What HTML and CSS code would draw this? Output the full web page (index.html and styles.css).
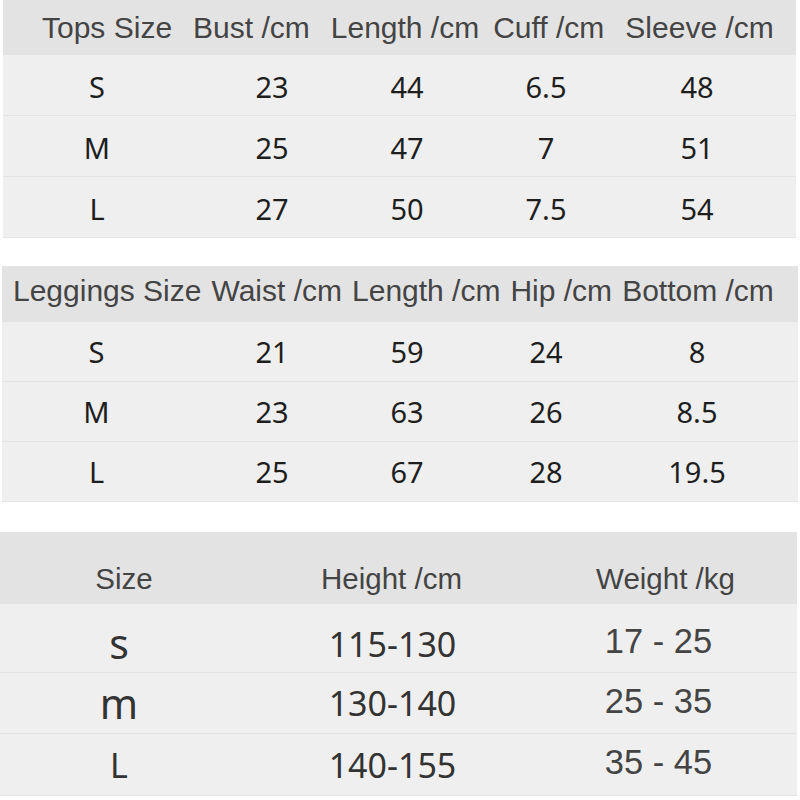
FILE: index.html
```html
<!DOCTYPE html>
<html>
<head>
<meta charset="utf-8">
<link rel="stylesheet" href="styles.css">
</head>
<body>
<section class="table t1">
  <div class="head">
    <span>Tops Size</span><span>Bust /cm</span><span>Length /cm</span><span class="tight">Cuff /cm</span><span>Sleeve /cm</span>
  </div>
  <div class="row"><span>S</span><span>23</span><span>44</span><span>6.5</span><span>48</span></div>
  <div class="row"><span>M</span><span>25</span><span>47</span><span>7</span><span>51</span></div>
  <div class="row"><span>L</span><span>27</span><span>50</span><span>7.5</span><span>54</span></div>
</section>

<section class="table t2">
  <div class="head">
    <span>Leggings Size</span><span>Waist /cm</span><span>Length /cm</span><span>Hip /cm</span><span>Bottom /cm</span>
  </div>
  <div class="row"><span>S</span><span>21</span><span>59</span><span>24</span><span>8</span></div>
  <div class="row"><span>M</span><span>23</span><span>63</span><span>26</span><span>8.5</span></div>
  <div class="row"><span>L</span><span>25</span><span>67</span><span>28</span><span>19.5</span></div>
</section>

<section class="table t3">
  <div class="head">
    <span>Size</span><span>Height /cm</span><span>Weight /kg</span>
  </div>
  <div class="row first"><span class="lower">s</span><span class="h">115-130</span><span class="w">17 - 25</span></div>
  <div class="row"><span class="lower">m</span><span class="h">130-140</span><span class="w">25 - 35</span></div>
  <div class="row"><span class="cap">L</span><span class="h">140-155</span><span class="w">35 - 45</span></div>
</section>
</body>
</html>
```

FILE: styles.css
```css
html, body {
  margin: 0;
  padding: 0;
  background: #ffffff;
}

body {
  width: 800px;
  height: 800px;
  overflow: hidden;
}

.table {
  background: #efefef;
}

.head {
  background: #e3e3e3;
  color: #444444;
  font-family: "Liberation Sans", Arial, sans-serif;
  white-space: nowrap;
}

.head span,
.row span {
  white-space: nowrap;
  line-height: 1;
}

.row {
  display: grid;
  align-items: center;
  justify-items: center;
  border-bottom: 1px solid #e4e4e4;
  color: #1e1e1e;
  font-family: "Noto Sans", "Open Sans", sans-serif;
  box-sizing: border-box;
}

/* ---------- table 1 ---------- */
.t1 {
  margin: 0 4px 0 3px;
}

.t1 .head {
  height: 55px;
  display: flex;
  align-items: center;
  gap: 21px;
  padding-left: 39px;
  font-size: 30px;
}

.t1 .head .tight {
  margin-left: -7px;
}

.t1 .row {
  height: 61px;
  padding-top: 3px;
  font-size: 29px;
  grid-template-columns: 188px 162px 108px 170px 132px;
}

/* ---------- table 2 ---------- */
.t2 {
  margin: 28px 2px 0 2px;
}

.t2 .head {
  height: 56px;
  box-sizing: border-box;
  display: flex;
  align-items: center;
  gap: 10px;
  padding-left: 11px;
  padding-bottom: 7px;
  font-size: 30px;
}

.t2 .row {
  height: 60px;
  font-size: 29px;
  grid-template-columns: 189px 162px 108px 170px 132px;
}

/* ---------- table 3 ---------- */
.t3 {
  margin: 30px 3px 0 0;
}

.t3 .head {
  height: 72px;
  box-sizing: border-box;
  display: grid;
  grid-template-columns: 248px 287px 261px;
  justify-items: center;
  align-items: end;
  padding-bottom: 11px;
  font-size: 29.5px;
}

.t3 .row {
  height: 61px;
  grid-template-columns: 238px 309px 223px;
  color: #333333;
  font-size: 34px;
}

.t3 .row.first {
  height: 69px;
  padding-top: 11px;
}

.t3 .row:last-child {
  height: 62px;
  border-bottom-color: #e6e6e6;
}

.t3 .lower {
  font-size: 41px;
}

.t3 .w {
  font-family: "Liberation Sans", Arial, sans-serif;
  color: #444444;
  font-size: 34.5px;
  position: relative;
  top: -2px;
}
```
